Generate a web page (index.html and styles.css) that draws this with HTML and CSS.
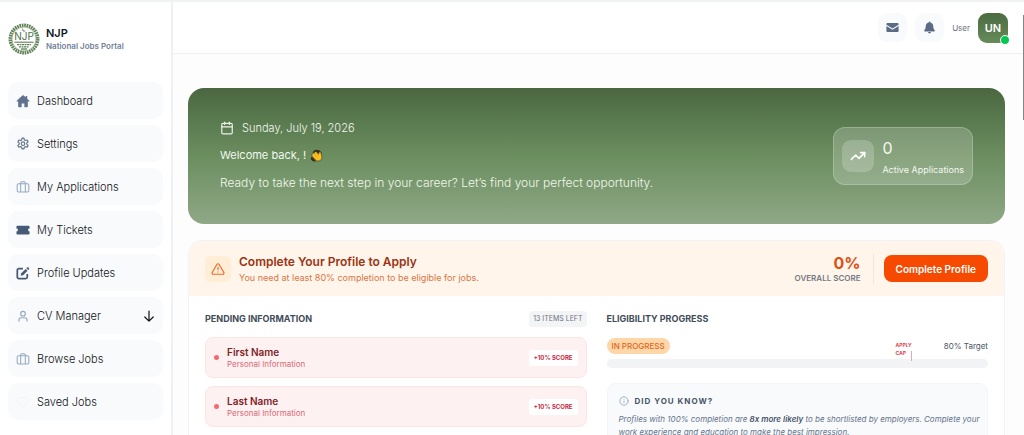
FILE: index.html
```html
<!DOCTYPE html>
<html lang="en">
<head>
  <meta charset="UTF-8" />
  <meta name="viewport" content="width=device-width, initial-scale=1" />
  <title>NJP - National Jobs Portal</title>
  <link rel="stylesheet" href="styles.css">
</head>
<body>

  <aside class="sidebar">
    <div class="brand">
      <svg class="logo" viewBox="0 0 32 32" fill="none">
        <circle cx="16" cy="16" r="13.8" stroke="#5f8257" stroke-width="3.4" stroke-dasharray="1.7 .7" />
        <circle cx="16" cy="16" r="12" fill="#fff" stroke="#8aa583" stroke-width=".8" />
        <path d="M15 5a2 2 0 1 0 3 2.4A2 2 0 0 1 15 5z" fill="#6f8f68" />
        <text x="16" y="17.4" text-anchor="middle" class="logo-text">NJP</text>
        <path d="M6.500 19.200h19" stroke="#4f7047" stroke-width="1" />
        <path d="M9 21.600h14M11 23.800h10" stroke="#5f8257" stroke-width="1.300" stroke-dasharray="2 .5" />
        <path d="M13 26h6" stroke="#4f7047" stroke-width="1.200" />
      </svg>
      <div>
        <div class="brand-name">NJP</div>
        <div class="brand-sub">National Jobs Portal</div>
      </div>
    </div>

    <nav class="menu">
      <a href="#" class="menu-item">
        <svg class="icon" viewBox="0 0 16 16" fill="#60718e"><path d="M8 1 .8 7.600c-.4.4-.1 1 .4 1h1.300V14c0 .6.4 1 1 1h2.900v-4.200h3.200V15h2.900c.6 0 1-.4 1-1V8.600h1.300c.5 0 .8-.6.4-1L12.800 5.300V2.200h-1.800v1.400z" /></svg>
        Dashboard
      </a>
      <a href="#" class="menu-item">
        <svg class="icon" viewBox="0 0 24 24" fill="none" stroke="#64748b" stroke-width="2" stroke-linejoin="round"><path d="M10.300 2h3.400l.6 3 1.900 1.100 2.900-1 1.700 3-2.300 2v2.200l2.300 2-1.700 3-2.900-1-1.900 1.100-.6 3h-3.400l-.6-3-1.900-1.100-2.900 1-1.700-3 2.300-2v-2.200l-2.300-2 1.700-3 2.900 1L9.700 5z" /><circle cx="12" cy="11.400" r="3" /></svg>
        Settings
      </a>
      <a href="#" class="menu-item">
        <svg class="icon" viewBox="0 0 24 24" fill="none" stroke="#94a9c0" stroke-width="1.800"><rect x="2" y="6.500" width="20" height="14" rx="2.500" /><path d="M8 20.500V5a2 2 0 0 1 2-2h4a2 2 0 0 1 2 2v15.500" /></svg>
        My Applications
      </a>
      <a href="#" class="menu-item">
        <svg class="icon" viewBox="0 0 16 16" fill="#475a75"><path d="M1.500 3h13c.6 0 1 .4 1 1v2.300a1.700 1.700 0 0 0 0 3.400V12c0 .6-.4 1-1 1h-13c-.6 0-1-.4-1-1V9.700a1.700 1.700 0 0 0 0-3.400V4c0-.6.4-1 1-1z" /></svg>
        My Tickets
      </a>
      <a href="#" class="menu-item">
        <svg class="icon" viewBox="0 0 16 16" fill="none" stroke="#475a75" stroke-width="2"><path d="M8 3H3.200A1.700 1.700 0 0 0 1.500 4.700v8A1.700 1.700 0 0 0 3.200 14.400h8a1.700 1.700 0 0 0 1.700-1.700V9" /><path d="M5.300 11.200 6 8.300 11 3.300 13.200 5.500 8.200 10.500z" fill="#475a75" stroke="none" /><path d="m11.800 2.500.7-.7a1.200 1.200 0 0 1 1.700 0l.5.5a1.200 1.200 0 0 1 0 1.700l-.7.7z" fill="#475a75" stroke="none" /></svg>
        Profile Updates
      </a>
      <a href="#" class="menu-item">
        <svg class="icon" viewBox="0 0 24 24" fill="none" stroke="#94a9c0" stroke-width="2" stroke-linecap="round"><circle cx="12" cy="8" r="4" /><path d="M5 21v-2a4 4 0 0 1 4-4h6a4 4 0 0 1 4 4v2" /></svg>
        CV Manager
        <svg class="arrow" viewBox="0 0 12 12" fill="none" stroke="#111" stroke-width="1.200" stroke-linecap="round" stroke-linejoin="round"><path d="M6 1v10M1.800 7 6 11.200 10.200 7" /></svg>
      </a>
      <a href="#" class="menu-item">
        <svg class="icon" viewBox="0 0 24 24" fill="none" stroke="#94a9c0" stroke-width="1.800"><rect x="2" y="6.500" width="20" height="14" rx="2.500" /><path d="M8 20.500V5a2 2 0 0 1 2-2h4a2 2 0 0 1 2 2v15.500" /></svg>
        Browse Jobs
      </a>
      <a href="#" class="menu-item">
        <svg class="icon" viewBox="0 0 24 24" fill="none" stroke="#f3f5f8" stroke-width="2"><path d="M12 20 4 12a5 5 0 0 1 8-6 5 5 0 0 1 8 6z" /></svg>
        Saved Jobs
      </a>
    </nav>
  </aside>

  <div class="content">
    <header class="topbar">
      <button class="icon-btn" aria-label="Messages">
        <svg viewBox="0 0 16 16" fill="#5b6b86"><path d="M2 2.500h12c.9 0 1.500.6 1.500 1.500v.5L8 9.300.5 4.500V4c0-.9.6-1.500 1.500-1.500z" /><path d="M.5 6 8 10.800 15.500 6v6c0 .9-.6 1.500-1.500 1.500H2c-.9 0-1.500-.6-1.500-1.500z" /></svg>
      </button>
      <button class="icon-btn" aria-label="Notifications">
        <svg viewBox="0 0 16 16" fill="#5b6b86"><path d="M8 .5c.6 0 1 .4 1 1v.4c2.100.4 3.600 2.200 3.600 4.400 0 2.900.8 4 1.700 4.900.6.600.2 1.600-.7 1.600H2.400c-.9 0-1.300-1-.7-1.600.9-.9 1.700-2 1.700-4.900C3.400 4.100 4.900 2.300 7 1.900v-.4c0-.6.400-1 1-1zM6.200 13.500h3.600a1.800 1.800 0 0 1-3.600 0z" /></svg>
      </button>
      <span class="user-label">User</span>
      <div class="avatar">UN<span class="online"></span></div>
    </header>

    <main class="main">
      <section class="hero">
        <div class="hero-text">
          <div class="date">
            <svg viewBox="0 0 24 24" fill="none" stroke="#edf3ea" stroke-width="2" stroke-linecap="round"><rect x="3" y="4" width="18" height="18" rx="2" /><path d="M8 2v4M16 2v4M3 10h18" /></svg>
            Sunday, July 19, 2026
          </div>
          <div class="welcome">
            Welcome back, !
            <svg viewBox="0 0 16 16"><path d="M3 4 6.500 1l5 .5 3 3-1 3z" fill="#33301c" /><path d="M1.500 9.500 1 12.500 3.500 15l4 .5-3-4z" fill="#33301c" /><path d="M2.500 6.500c.3-1.200 1.500-1.700 2.500-1l.5-1.300c.5-1 1.700-1.200 2.500-.4l2.600 2.500L11.200 4c.5-1 2-.8 2.200.3l1.200 5.200c.4 2.800-1.600 5.300-4.400 5.300-1.500 0-2.700-.6-3.700-1.600L3 9.300c-.6-.7-.8-1.800-.5-2.800z" fill="#fbbf24" stroke="#3a3220" stroke-width=".7" /><path d="m5 6.500 3.500 3.500M7 5l3.200 3.200" stroke="#dc930f" stroke-width=".7" /></svg>
          </div>
          <p class="lead">Ready to take the next step in your career? Let’s find your perfect opportunity.</p>
        </div>
        <div class="stat">
          <div class="stat-icon">
            <svg viewBox="0 0 24 24" fill="none" stroke="#fff" stroke-width="2.400" stroke-linecap="round" stroke-linejoin="round"><path d="m2 17 6.500-6.500 5 5L22 7" /><path d="M16 7h6v6" /></svg>
          </div>
          <div class="stat-text">
            <div class="stat-value">0</div>
            <div class="stat-label">Active Applications</div>
          </div>
        </div>
      </section>

      <section class="card">
        <div class="card-head">
          <div class="warn">
            <svg viewBox="0 0 24 24" fill="none" stroke="#ea6a2a" stroke-width="2" stroke-linecap="round" stroke-linejoin="round"><path d="M10.300 3.900 2 18a2 2 0 0 0 1.700 3h16.600a2 2 0 0 0 1.700-3L13.700 3.900a2 2 0 0 0-3.400 0z" /><path d="M12 9v4M12 17h.01" /></svg>
          </div>
          <div class="card-title">
            <h2>Complete Your Profile to Apply</h2>
            <p>You need at least 80% completion to be eligible for jobs.</p>
          </div>
          <div class="score">
            <div class="score-value">0%</div>
            <div class="score-label">OVERALL SCORE</div>
          </div>
          <button class="complete-btn">Complete Profile</button>
        </div>

        <div class="columns">
          <div class="pending">
            <div class="column-head">
              <h3>PENDING INFORMATION</h3>
              <span class="items-left">13 ITEMS LEFT</span>
            </div>
            <div class="pending-item">
              <span class="dot"></span>
              <div>
                <div class="item-name">First Name</div>
                <div class="item-group">Personal Information</div>
              </div>
              <span class="plus">+10% SCORE</span>
            </div>
            <div class="pending-item">
              <span class="dot"></span>
              <div>
                <div class="item-name">Last Name</div>
                <div class="item-group">Personal Information</div>
              </div>
              <span class="plus">+10% SCORE</span>
            </div>
          </div>

          <div class="eligibility">
            <h3>ELIGIBILITY PROGRESS</h3>
            <div class="progress-head">
              <span class="status">IN PROGRESS</span>
              <span class="target">80% Target</span>
            </div>
            <div class="progress">
              <span class="cap">APPLY<br>CAP</span>
            </div>
            <div class="tip">
              <div class="tip-title">
                <svg viewBox="0 0 24 24" fill="none" stroke="#94a3b8" stroke-width="2" stroke-linecap="round"><circle cx="12" cy="12" r="10" /><path d="M12 16v-4M12 8h.01" /></svg>
                DID YOU KNOW?
              </div>
              <p>Profiles with 100% completion are <strong>8x more likely</strong> to be shortlisted by employers. Complete your work experience and education to make the best impression.</p>
            </div>
          </div>
        </div>
      </section>
    </main>
  </div>
  <div class="scroll-thumb"></div>

</body>
</html>
```

FILE: styles.css
```css
* {
  box-sizing: border-box;
}
body {
  display: flex;
  height: 100vh;
  margin: 0;
  overflow: hidden;
  border-top: 2px solid #f1f2f3;
  font-family: Inter, "Liberation Sans", sans-serif;
  font-size: 12px;
  line-height: 16px;
  color: #1f2937;
  background: #fdfdfe;
}
h2, h3, p {
  margin: 0;
}
button {
  border: none;
  font-family: inherit;
  cursor: pointer;
}
svg {
  flex: none;
}

/* sidebar */
.sidebar {
  flex: none;
  width: 173px;
  padding: 20px 8px 0;
  border-right: 2px solid #edf0f4;
  background: #fff;
}
.brand {
  display: flex;
  align-items: center;
  gap: 6px;
  height: 34px;
  margin-bottom: 26px;
}
.logo {
  width: 32px;
  height: 32px;
}
.logo-text {
  font-size: 10px;
  fill: #4f7047;
}
.brand-name {
  font-size: 11px;
  line-height: 14px;
  font-weight: 600;
  color: #111827;
}
.brand-sub {
  font-size: 8px;
  line-height: 13px;
  font-weight: 600;
  color: #71819a;
  white-space: nowrap;
}
.menu {
  display: flex;
  flex-direction: column;
  gap: 6px;
}
.menu-item {
  display: flex;
  align-items: center;
  gap: 7px;
  height: 37px;
  padding: 0 8px;
  border-radius: 10px;
  background: #f9fafc;
  font-size: 11px;
  font-weight: 300;
  color: #111418;
  text-decoration: none;
  white-space: nowrap;
}
.icon {
  width: 14px;
  height: 14px;
}
.arrow {
  width: 12px;
  height: 12px;
  margin-left: auto;
}

/* top bar */
.content {
  flex: 1;
  min-width: 0;
}
.topbar {
  display: flex;
  align-items: center;
  justify-content: flex-end;
  gap: 8px;
  height: 52px;
  padding-right: 16px;
  border-bottom: 1px solid #eef0f3;
  background: #fff;
}
.icon-btn {
  display: grid;
  place-items: center;
  width: 29px;
  height: 29px;
  padding: 0;
  border-radius: 9px;
  background: #f9fafc;
}
.icon-btn svg {
  width: 13px;
  height: 13px;
}
.user-label {
  font-size: 8px;
  color: #6b7280;
}
.avatar {
  position: relative;
  display: grid;
  place-items: center;
  width: 30px;
  height: 30px;
  border-radius: 9px;
  background: linear-gradient(#4b6b41, #668b59);
  font-size: 11px;
  font-weight: 600;
  color: #fff;
}
.online {
  position: absolute;
  right: -2px;
  bottom: -2px;
  width: 10px;
  height: 10px;
  border: 1px solid #fff;
  border-radius: 50%;
  background: #05c650;
}

/* welcome banner */
.main {
  padding: 34px 19px 0 15px;
}
.hero {
  display: flex;
  align-items: center;
  justify-content: space-between;
  height: 136px;
  padding: 0 32px;
  border-radius: 16px;
  background: linear-gradient(#4a6741, #6b8e5f 50%, #8fa886);
  color: #f3f8f0;
}
.hero-text {
  display: flex;
  flex-direction: column;
  gap: 11px;
}
.date {
  display: flex;
  align-items: center;
  gap: 8px;
  font-size: 11px;
  font-weight: 300;
}
.date svg {
  width: 14px;
  height: 14px;
}
.welcome {
  display: flex;
  align-items: center;
  gap: 4px;
  font-size: 11px;
}
.welcome svg {
  width: 13px;
  height: 13px;
}
.lead {
  font-size: 12px;
  line-height: 18px;
  font-weight: 300;
  color: #f1f8ec;
}
.stat {
  display: flex;
  align-items: center;
  gap: 8px;
  height: 58px;
  padding: 0 8px;
  border: 1px solid rgba(255, 255, 255, 0.22);
  border-radius: 12px;
  background: rgba(255, 255, 255, 0.2);
}
.stat-icon {
  display: grid;
  place-items: center;
  width: 32px;
  height: 32px;
  border-radius: 9px;
  background: rgba(255, 255, 255, 0.2);
}
.stat-icon svg {
  width: 16px;
  height: 16px;
}
.stat-text {
  padding-top: 6px;
}
.stat-value {
  font-size: 16px;
  line-height: 22px;
}
.stat-label {
  font-size: 9px;
  line-height: 22px;
}

/* profile card */
.card {
  margin-top: 16px;
  border: 1px solid #f0f3f7;
  border-radius: 14px;
  background: #fff;
  overflow: hidden;
}
.card-head {
  display: flex;
  align-items: center;
  height: 55px;
  padding: 0 16px;
  background: #fff5eb;
}
.warn {
  display: grid;
  place-items: center;
  width: 26px;
  height: 26px;
  border-radius: 6px;
  background: #ffedd5;
}
.warn svg {
  width: 14px;
  height: 14px;
}
.card-title {
  flex: 1;
  margin-left: 8px;
}
.card-title h2 {
  font-size: 12px;
  line-height: 17px;
  font-weight: 600;
  color: #9a3412;
}
.card-title p {
  font-size: 9px;
  line-height: 15px;
  color: #d97745;
}
.score {
  padding-right: 12px;
  border-right: 1px solid #f1e6df;
  text-align: right;
}
.score-value {
  font-size: 16px;
  line-height: 18px;
  font-weight: 700;
  color: #e04e14;
}
.score-label {
  font-size: 8px;
  line-height: 12px;
  font-weight: 600;
  color: #747a84;
}
.complete-btn {
  height: 27px;
  margin-left: 10px;
  padding: 0 12px;
  border-radius: 8px;
  background: #f54a00;
  font-size: 10px;
  font-weight: 600;
  color: #fff;
}
.columns {
  display: grid;
  grid-template-columns: 1fr 1fr;
  gap: 20px;
  padding: 15px 16px;
}
h3 {
  font-size: 9px;
  line-height: 16px;
  font-weight: 700;
  color: #424c5a;
}
.column-head {
  display: flex;
  align-items: center;
  justify-content: space-between;
  margin-bottom: 10px;
}
.items-left {
  padding: 0 4px;
  border-radius: 4px;
  background: #f3f4f6;
  font-size: 7px;
  color: #6b7280;
}
.pending-item {
  display: flex;
  align-items: center;
  gap: 8px;
  height: 41px;
  margin-bottom: 8px;
  padding: 0 8px;
  border: 1px solid #fde5e6;
  border-radius: 8px;
  background: #fef1f2;
}
.dot {
  width: 5px;
  height: 5px;
  border-radius: 50%;
  background: #f26b70;
}
.item-name {
  font-size: 10px;
  line-height: 12px;
  font-weight: 600;
  color: #7f2326;
}
.item-group {
  font-size: 8px;
  line-height: 12px;
  color: #d96a72;
}
.plus {
  margin-left: auto;
  padding: 0 5px;
  border-radius: 3px;
  background: #fff;
  font-size: 6px;
  font-weight: 700;
  color: #c5283d;
}

/* eligibility */
.progress-head {
  display: flex;
  align-items: center;
  justify-content: space-between;
  margin: 11px 0 5px;
}
.status {
  padding: 0 5px;
  border-radius: 8px;
  background: #ffd6a8;
  font-size: 8px;
  font-weight: 500;
  color: #e0661f;
}
.target {
  font-size: 8px;
  color: #4b5563;
}
.progress {
  position: relative;
  height: 9px;
  border-radius: 5px;
  background: #f2f3f5;
}
.cap {
  position: absolute;
  right: 20%;
  bottom: 7px;
  height: 20px;
  font-size: 5px;
  line-height: 8px;
  font-weight: 700;
  color: #e0454f;
}
.cap::after {
  content: "";
  position: absolute;
  right: 0;
  bottom: 0;
  width: 1px;
  height: 10px;
  background: #e9a8ad;
}
.tip {
  margin-top: 15px;
  padding: 9px 4px 9px 11px;
  border: 1px solid #f3f5f8;
  border-radius: 9px;
  background: #f9fafc;
}
.tip-title {
  display: flex;
  align-items: center;
  gap: 6px;
  margin-bottom: 4px;
  font-size: 8px;
  font-weight: 700;
  letter-spacing: 1px;
  color: #475569;
}
.tip-title svg {
  width: 10px;
  height: 10px;
}
.tip p {
  font-size: 8px;
  line-height: 13px;
  font-style: italic;
  color: #64748b;
}
.tip strong {
  font-weight: 600;
  color: #475569;
}

/* page scroll indicator */
.scroll-thumb {
  position: fixed;
  top: 15px;
  right: 0;
  width: 1px;
  height: 105px;
  background: #858585;
}
```
